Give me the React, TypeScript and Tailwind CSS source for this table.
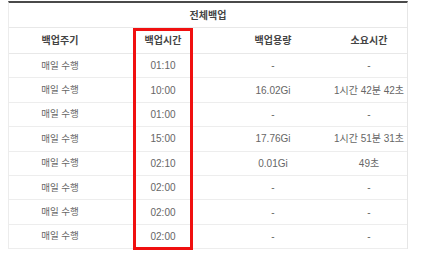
import React from "react";

const rows = [
  ["매일 수행", "01:10", "-", "-"],
  ["매일 수행", "10:00", "16.02Gi", "1시간 42분 42초"],
  ["매일 수행", "01:00", "-", "-"],
  ["매일 수행", "15:00", "17.76Gi", "1시간 51분 31초"],
  ["매일 수행", "02:10", "0.01Gi", "49초"],
  ["매일 수행", "02:00", "-", "-"],
  ["매일 수행", "02:00", "-", "-"],
  ["매일 수행", "02:00", "-", "-"],
];

const font = { fontFamily: '"Liberation Sans", "Noto Sans CJK KR", sans-serif' };

export default function App() {
  return (
    <div className="w-[434px] h-[255px] bg-white pt-[1px]" style={font}>
      <div className="relative ml-[8px] w-[400px] border-t-2 border-[#4a4a4a] border-l border-r border-l-[#ececec] border-r-[#e6e6e6]">
        <div className="h-[25px] border-b border-[#e8e8e8] flex items-center justify-center text-[10px] font-bold text-[#444]">
          전체백업
        </div>
        <div className="h-[26px] border-b border-[#e8e8e8] grid grid-cols-[102px_104px_116px_1fr] items-center text-center text-[10px] font-bold text-[#444]">
          <div>백업주기</div>
          <div>백업시간</div>
          <div>백업용량</div>
          <div>소요시간</div>
        </div>
        {rows.map((r, i) => (
          <div
            key={i}
            className="h-[24.4px] border-b border-[#ededed] grid grid-cols-[102px_104px_116px_1fr] items-center text-center text-[10px] text-[#666]"
          >
            <div className="text-[9.5px]">{r[0]}</div>
            <div>{r[1]}</div>
            <div>{r[2]}</div>
            <div>{r[3]}</div>
          </div>
        ))}
        <div className="absolute left-[124px] top-[25px] w-[60px] h-[222px] border-[3px] border-[#f01010]" />
      </div>
    </div>
  );
}
